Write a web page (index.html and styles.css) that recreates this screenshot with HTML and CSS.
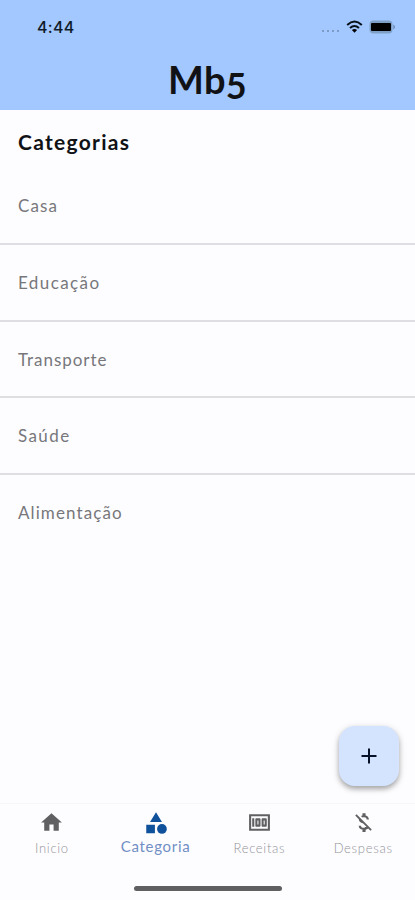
FILE: index.html
```html
<!DOCTYPE html>
<html lang="pt">
<head>
<meta charset="utf-8">
<meta name="viewport" content="width=device-width">
<title>Mb5</title>
<link rel="stylesheet" href="styles.css">
</head>
<body>
<header>
  <div class="status">
    <time>4:44</time>
    <div class="indicators">
      <span class="signal"><i></i><i></i><i></i><i></i></span>
      <svg class="wifi" viewBox="0 0 17 13"><path d="M1.2 4.9Q8.5-1.8 15.8 4.9M4 8Q8.5 3.9 13 8" fill="none" stroke="#071019" stroke-width="2"/><path d="M5.9 10Q8.5 7.8 11.1 10L8.5 12.8Z"/></svg>
      <svg class="battery" viewBox="0 0 27 14"><rect x=".5" y=".5" width="23" height="13" rx="4" fill="#7f9fc7"/><rect x="2" y="3" width="20" height="8" rx="1"/><path d="M24.5 4.5Q27 7 24.5 9.5Z" fill="#58718f"/></svg>
    </div>
  </div>
  <h1>Mb<span class="digit">5</span></h1>
</header>
<main>
  <h2>Categorias</h2>
  <ul>
    <li class="casa">Casa</li>
    <li class="educacao">Educação</li>
    <li class="transporte">Transporte</li>
    <li class="saude">Saúde</li>
    <li class="alimentacao">Alimentação</li>
  </ul>
</main>
<button class="fab" aria-label="Adicionar"><svg viewBox="0 0 16 16"><path d="M8 .5v15M.5 8h15" stroke="#071127" stroke-width="2"/></svg></button>
<nav>
  <a class="inicio"><svg viewBox="0 0 24 24"><path d="M10 20v-6h4v6h5v-8h3L12 3 2 12h3v8z"/></svg><span>Inicio</span></a>
  <a class="active"><svg viewBox="0 0 24 24"><path d="M12 2l-5.5 9h11zM3 13.5h8v8H3z"/><circle cx="17.5" cy="17.5" r="4.5"/></svg><span>Categoria</span></a>
  <a class="receitas"><svg viewBox="0 0 24 24"><path fill-rule="evenodd" d="M5 8h2v8H5zM12 8H9c-.55 0-1 .45-1 1v6c0 .55.45 1 1 1h3c.55 0 1-.45 1-1V9c0-.55-.45-1-1-1zm-1 6h-1v-4h1v4zM18 8h-3c-.55 0-1 .45-1 1v6c0 .55.45 1 1 1h3c.55 0 1-.45 1-1V9c0-.55-.45-1-1-1zm-1 6h-1v-4h1v4zM2 4v16h20V4H2zm2 14V6h16v12H4z"/></svg><span>Receitas</span></a>
  <a class="despesas"><svg viewBox="0 0 24 24"><path d="M12.5 6.9c1.78 0 2.44.85 2.5 2.1h2.21c-.07-1.72-1.12-3.3-3.21-3.81V3h-3v2.16c-.53.12-1.03.3-1.48.54l1.47 1.47c.41-.17.91-.27 1.51-.27zM5.33 4.06L4.06 5.33 7.5 8.77c0 2.08 1.56 3.21 3.91 3.91l3.51 3.51c-.34.48-1.05.91-2.42.91-2.06 0-2.87-.92-2.98-2.1h-2.2c.12 2.19 1.76 3.42 3.68 3.83V21h3v-2.15c.96-.18 1.82-.55 2.45-1.12l2.22 2.22 1.27-1.27z"/></svg><span>Despesas</span></a>
</nav>
<footer><div class="home-bar"></div></footer>
</body>
</html>
```
FILE: styles.css
```css
* { box-sizing: border-box; }
body {
  margin: 0;
  height: 900px;
  display: flex;
  flex-direction: column;
  position: relative;
  overflow: hidden;
  background: #fdfdff;
  color: #111216;
  font-family: Lato, sans-serif;
}
header { height: 110px; background: #a2c8ff; flex: none; }
.status {
  height: 54px;
  padding: 0 19px 0 37px;
  display: flex;
  align-items: center;
  justify-content: space-between;
}
time { font: 500 16px/20px Inter, sans-serif; letter-spacing: .3px; color: #101c2b; }
.indicators { display: flex; align-items: center; margin-top: -1px; }
.signal { display: flex; gap: 3px; margin: 9px 7px 0 0; }
.signal i { width: 2px; height: 2px; border-radius: 1px; background: #6f8db6; }
.wifi { width: 17px; height: 13px; margin-right: 6px; }
.battery { width: 27px; height: 14px; }
h1 {
  margin: 0;
  font-size: 38px;
  line-height: 50px;
  font-weight: 700;
  text-align: center;
  letter-spacing: .3px;
}
.digit { display: inline-block; font-size: 36px; line-height: 36px; vertical-align: -5px; }
main { flex: 1; }
h2 {
  margin: 0;
  padding: 20px 18px 0;
  font-size: 21px;
  line-height: 24px;
  letter-spacing: 1.3px;
  height: 58px;
}
ul { margin: 0; padding: 0; list-style: none; }
li {
  height: 76.8px;
  padding-left: 18px;
  border-bottom: 2px solid #dfdfe3;
  color: #77777b;
  font-size: 17px;
  line-height: 75px;
  letter-spacing: 1.1px;
}
li:last-child { border-bottom: 0; }
.educacao, .saude { letter-spacing: 1.4px; }
.transporte { letter-spacing: .95px; }
.fab {
  position: absolute;
  left: 339px;
  top: 726px;
  width: 60px;
  height: 60px;
  padding: 0;
  border: 0;
  border-radius: 16px;
  background: #d4e4ff;
  display: grid;
  place-items: center;
  box-shadow: 0 3px 5px #0004, 0 2px 8px #0002;
}
.fab svg { width: 16px; height: 16px; }
nav {
  height: 67px;
  border-top: 1px solid #f7f7f9;
  display: grid;
  grid-template-columns: repeat(4, 1fr);
}
nav a {
  display: flex;
  flex-direction: column;
  align-items: center;
  padding-top: 6px;
  color: #94949a;
  font-size: 13px;
  line-height: 18px;
  font-weight: 300;
  letter-spacing: .7px;
}
nav svg { width: 25px; height: 25px; fill: #606063; }
nav span { margin-top: 4px; }
nav .active { color: #728fc4; font-size: 15px; font-weight: 400; letter-spacing: .7px; }
.active svg { fill: #10519c; width: 26px; height: 26px; }
.active span { margin-top: 1px; }
footer { height: 30px; display: flex; justify-content: center; padding-top: 16px; }
.home-bar { width: 148px; height: 5px; border-radius: 3px; background: #606062; }
```
